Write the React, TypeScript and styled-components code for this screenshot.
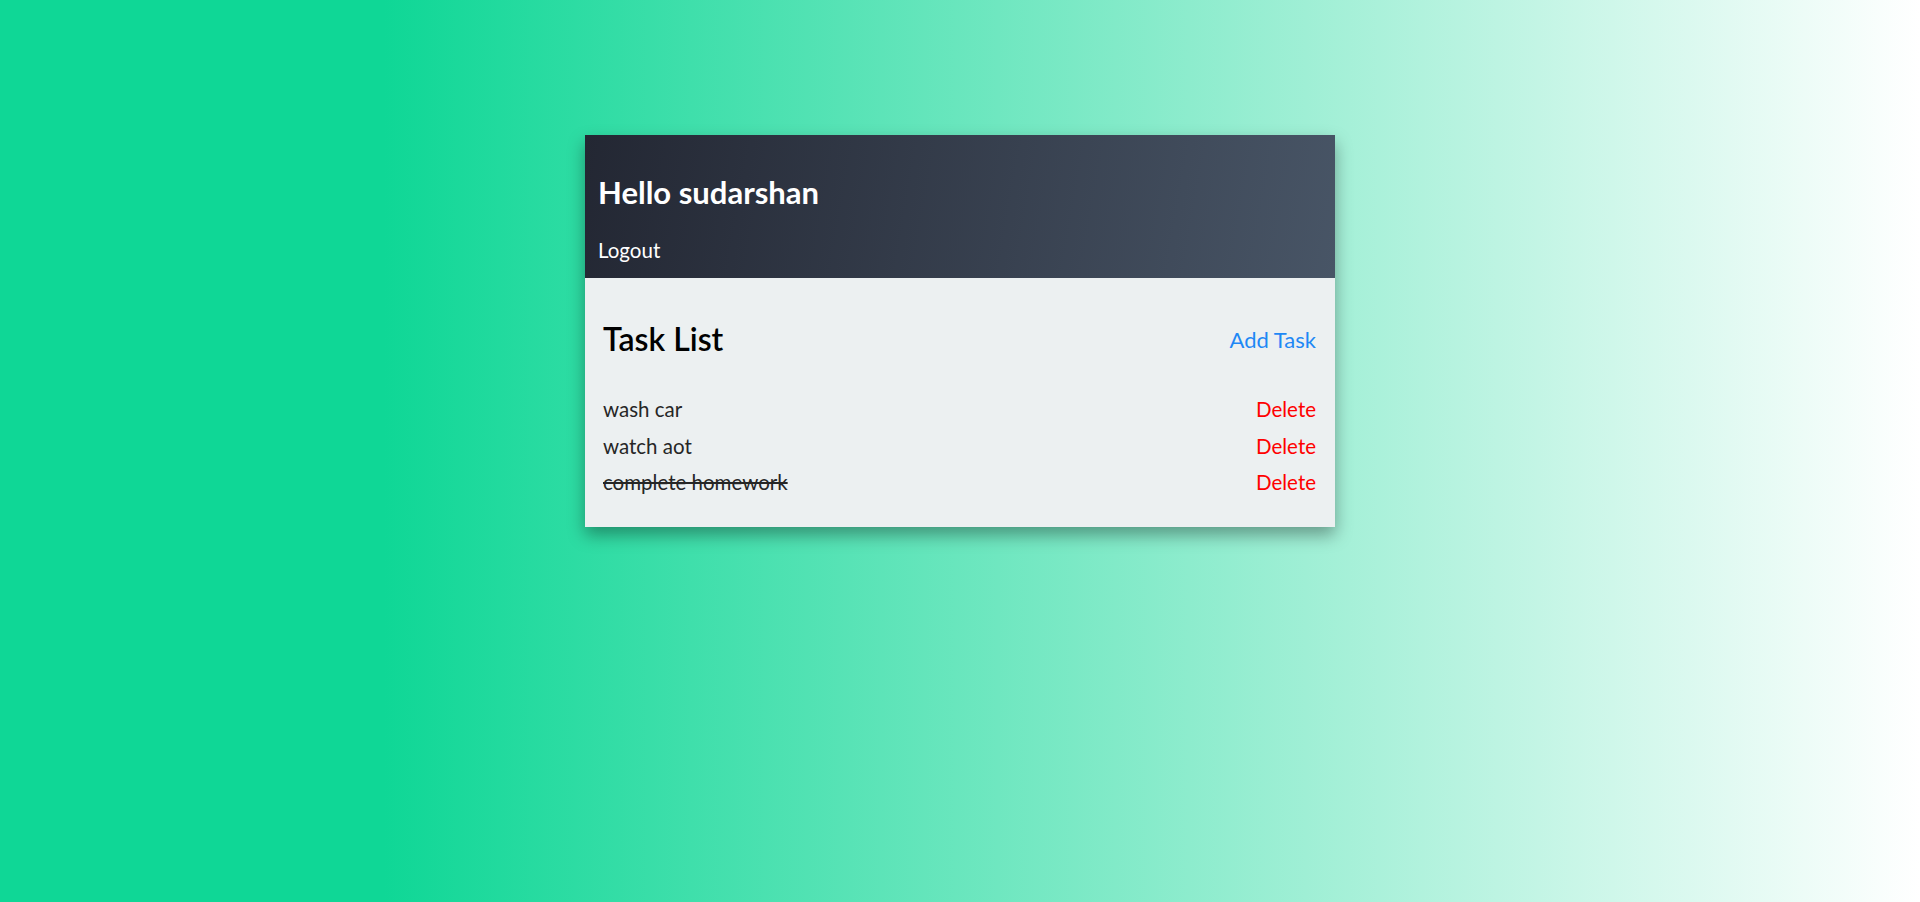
import React from 'react';
import styled, { createGlobalStyle } from 'styled-components';

const GlobalStyle = createGlobalStyle`
  html, body {
    margin: 0;
    padding: 0;
    height: 100%;
  }
  body {
    font-family: Lato, 'Noto Sans', sans-serif;
  }
`;

const Page = styled.div`
  width: 100vw;
  height: 100vh;
  padding-top: 135px;
  box-sizing: border-box;
  background: linear-gradient(to right, #0fd796 20%, #ffffff 100%);
  display: flex;
  justify-content: center;
  align-items: flex-start;
`;

const Card = styled.div`
  width: 750px;
  box-shadow: 0 8px 16px rgba(0, 0, 0, 0.35);
`;

const Header = styled.header`
  padding: 37px 13px 16px;
  background: linear-gradient(100deg, #232733 0%, #485566 100%);
  color: #ffffff;
`;

const Greeting = styled.h1`
  margin: 0 0 26px;
  font-size: 31px;
  line-height: 40px;
  font-weight: 700;
`;

const Logout = styled.a`
  display: block;
  font-size: 20.5px;
  line-height: 24px;
  cursor: pointer;
`;

const Body = styled.section`
  padding: 41px 19px 26px 18px;
  background-color: #ecf0f1;
`;

const TitleRow = styled.div`
  display: flex;
  justify-content: space-between;
  align-items: center;
  margin-bottom: 32px;
`;

const Title = styled.h2`
  margin: 0;
  font-size: 32px;
  line-height: 40px;
  font-weight: 600;
  color: #000000;
`;

const AddLink = styled.a`
  font-size: 22px;
  color: #1e88f5;
  cursor: pointer;
`;

const TaskRow = styled.div`
  display: flex;
  justify-content: space-between;
  font-size: 20.5px;
  line-height: 36.7px;
`;

const TaskName = styled.span<{ done?: boolean }>`
  color: #262626;
  text-decoration: ${(props) => (props.done ? 'line-through' : 'none')};
`;

const DeleteLink = styled.a`
  color: #ff0000;
  cursor: pointer;
`;

const tasks = [
  { name: 'wash car', done: false },
  { name: 'watch aot', done: false },
  { name: 'complete homework', done: true },
];

const App = () => {
  return (
    <>
      <GlobalStyle />
      <Page>
        <Card>
          <Header>
            <Greeting>Hello sudarshan</Greeting>
            <Logout>Logout</Logout>
          </Header>
          <Body>
            <TitleRow>
              <Title>Task List</Title>
              <AddLink>Add Task</AddLink>
            </TitleRow>
            {tasks.map((task) => (
              <TaskRow key={task.name}>
                <TaskName done={task.done}>{task.name}</TaskName>
                <DeleteLink>Delete</DeleteLink>
              </TaskRow>
            ))}
          </Body>
        </Card>
      </Page>
    </>
  );
};

export default App;
